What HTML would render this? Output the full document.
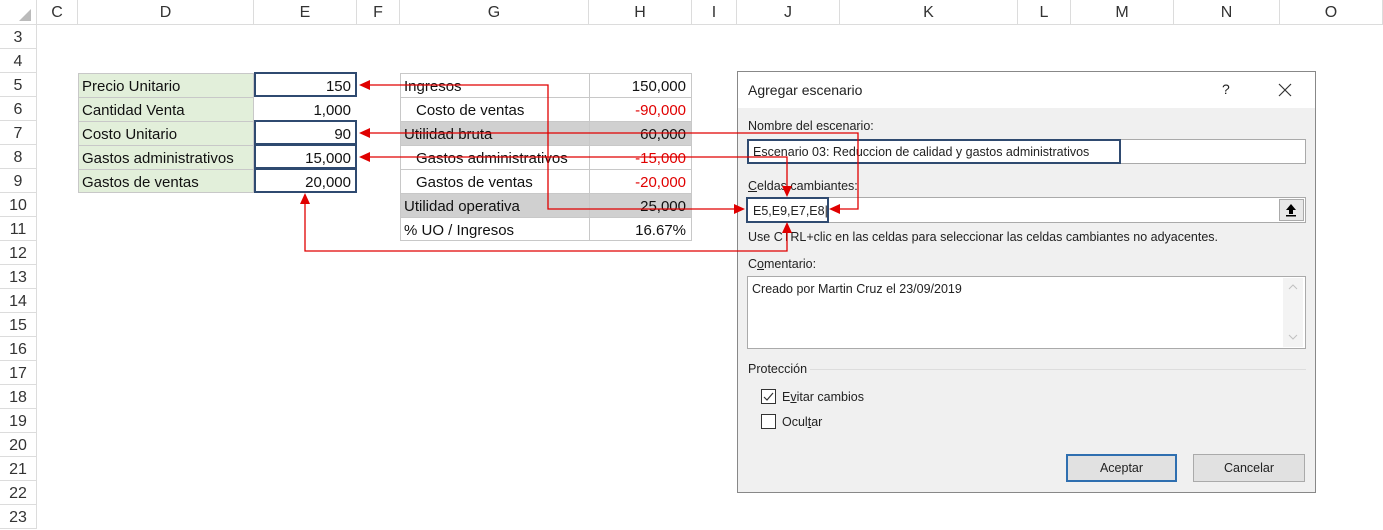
<!DOCTYPE html>
<html><head><meta charset="utf-8"><style>
*{margin:0;padding:0;box-sizing:border-box}
body{width:1383px;height:529px;position:relative;overflow:hidden;background:#fff;font-family:"Liberation Sans",Calibri,sans-serif;}
.a{position:absolute}
.hd{position:absolute;background:#fff;color:#333;font-size:16px;text-align:center;border-right:1px solid #dcdcdc;border-bottom:1px solid #dcdcdc}
.c{position:absolute;font-size:15px;line-height:24px;padding-top:2px;white-space:nowrap;color:#111}
.g{background:#e2efda}
.dlg{font-family:"Liberation Sans",sans-serif;font-size:12.5px;color:#222}
</style></head><body>
<div class="hd" style="left:0;top:0;width:37px;height:25px;background:#fff"></div>
<svg class="a" style="left:18px;top:8px" width="14" height="14"><polygon points="13,1 13,13 1,13" fill="#bbb"/></svg>
<div class="hd" style="left:37px;top:0;width:41px;height:25px;line-height:25px">C</div>
<div class="hd" style="left:78px;top:0;width:176px;height:25px;line-height:25px">D</div>
<div class="hd" style="left:254px;top:0;width:103px;height:25px;line-height:25px">E</div>
<div class="hd" style="left:357px;top:0;width:43px;height:25px;line-height:25px">F</div>
<div class="hd" style="left:400px;top:0;width:189px;height:25px;line-height:25px">G</div>
<div class="hd" style="left:589px;top:0;width:103px;height:25px;line-height:25px">H</div>
<div class="hd" style="left:692px;top:0;width:45px;height:25px;line-height:25px">I</div>
<div class="hd" style="left:737px;top:0;width:103px;height:25px;line-height:25px">J</div>
<div class="hd" style="left:840px;top:0;width:178px;height:25px;line-height:25px">K</div>
<div class="hd" style="left:1018px;top:0;width:53px;height:25px;line-height:25px">L</div>
<div class="hd" style="left:1071px;top:0;width:103px;height:25px;line-height:25px">M</div>
<div class="hd" style="left:1174px;top:0;width:106px;height:25px;line-height:25px">N</div>
<div class="hd" style="left:1280px;top:0;width:103px;height:25px;line-height:25px">O</div>
<div id="rows"></div>
<script>
var h='';for(var r=3;r<=23;r++){var y=25+(r-3)*24;h+='<div class="hd" style="left:0;top:'+y+'px;width:37px;height:24px;line-height:25px">'+r+'</div>';}
document.getElementById('rows').innerHTML=h;
</script>
<div class="a g" style="left:78px;top:73px;width:176px;height:120px;border:1px solid #c8c8c8"></div>
<div class="a" style="left:78px;top:97px;width:176px;border-top:1px solid #c8c8c8"></div>
<div class="a" style="left:78px;top:121px;width:176px;border-top:1px solid #c8c8c8"></div>
<div class="a" style="left:78px;top:145px;width:176px;border-top:1px solid #c8c8c8"></div>
<div class="a" style="left:78px;top:169px;width:176px;border-top:1px solid #c8c8c8"></div>
<div class="c" style="left:82px;top:73px">Precio Unitario</div>
<div class="c" style="left:82px;top:97px">Cantidad Venta</div>
<div class="c" style="left:82px;top:121px">Costo Unitario</div>
<div class="c" style="left:82px;top:145px">Gastos administrativos</div>
<div class="c" style="left:82px;top:169px">Gastos de ventas</div>
<div class="a" style="left:254px;top:72px;width:103px;height:25px;border:2px solid #2f4a70"></div>
<div class="a" style="left:254px;top:120px;width:103px;height:25px;border:2px solid #2f4a70"></div>
<div class="a" style="left:254px;top:144px;width:103px;height:25px;border:2px solid #2f4a70"></div>
<div class="a" style="left:254px;top:168px;width:103px;height:25px;border:2px solid #2f4a70"></div>
<div class="c" style="left:254px;top:73px;width:97px;text-align:right">150</div>
<div class="c" style="left:254px;top:97px;width:97px;text-align:right">1,000</div>
<div class="c" style="left:254px;top:121px;width:97px;text-align:right">90</div>
<div class="c" style="left:254px;top:145px;width:97px;text-align:right">15,000</div>
<div class="c" style="left:254px;top:169px;width:97px;text-align:right">20,000</div>
<div class="a" style="left:400px;top:121px;width:292px;height:24px;background:#d0d0d0"></div>
<div class="a" style="left:400px;top:193px;width:292px;height:24px;background:#d0d0d0"></div>
<div class="a" style="left:400px;top:73px;width:292px;height:168px;border:1px solid #c8c8c8"></div>
<div class="a" style="left:589px;top:73px;height:168px;border-left:1px solid #c8c8c8"></div>
<script>
for(var i=1;i<7;i++)document.write('<div class="a" style="left:400px;top:'+(73+24*i)+'px;width:292px;border-top:1px solid #c8c8c8"></div>');
</script>
<div class="c" style="left:404px;top:73px">Ingresos</div>
<div class="c" style="left:416px;top:97px">Costo de ventas</div>
<div class="c" style="left:404px;top:121px">Utilidad bruta</div>
<div class="c" style="left:416px;top:145px">Gastos administrativos</div>
<div class="c" style="left:416px;top:169px">Gastos de ventas</div>
<div class="c" style="left:404px;top:193px">Utilidad operativa</div>
<div class="c" style="left:404px;top:217px">% UO / Ingresos</div>
<div class="c" style="left:589px;top:73px;width:97px;text-align:right">150,000</div>
<div class="c" style="left:589px;top:97px;width:97px;text-align:right;color:#e00000">-90,000</div>
<div class="c" style="left:589px;top:121px;width:97px;text-align:right">60,000</div>
<div class="c" style="left:589px;top:145px;width:97px;text-align:right;color:#e00000">-15,000</div>
<div class="c" style="left:589px;top:169px;width:97px;text-align:right;color:#e00000">-20,000</div>
<div class="c" style="left:589px;top:193px;width:97px;text-align:right">25,000</div>
<div class="c" style="left:589px;top:217px;width:97px;text-align:right">16.67%</div>
<div class="a dlg" style="left:737px;top:71px;width:579px;height:422px;background:#f0f0f0;border:1px solid #888">
 <div class="a" style="left:0;top:0;width:577px;height:36px;background:#fff"></div>
 <div class="a" style="left:10px;top:10px;font-size:14px">Agregar escenario</div>
 <div class="a" style="left:484px;top:9px;font-size:14px">?</div>
 <svg class="a" style="left:540px;top:11px" width="14" height="14"><path d="M1 1L13 13M13 1L1 13" stroke="#333" stroke-width="1.2"/></svg>
 <div class="a" style="left:10px;top:47px">Nombre del escenario:</div>
 <div class="a" style="left:9px;top:67px;width:559px;height:25px;background:#fff;border:1px solid #aaa"></div>
 <div class="a" style="left:9px;top:67px;width:374px;height:25px;border:2px solid #2f4a70;padding:4px 0 0 4px;white-space:nowrap">Escenario 03: Reduccion de calidad y gastos administrativos</div>
 <div class="a" style="left:10px;top:107px"><u>C</u>eldas cambiantes:</div>
 <div class="a" style="left:9px;top:125px;width:559px;height:26px;background:#fff;border:1px solid #aaa"></div>
 <div class="a" style="left:8px;top:125px;width:83px;height:26px;border:2px solid #2f4a70;padding:5px 0 0 5px;white-space:nowrap">E5,E9,E7,E8|</div>
 <div class="a" style="left:541px;top:127px;width:25px;height:22px;background:#e8e8e8;border:1px solid #aaa"></div>
 <svg class="a" style="left:546px;top:131px" width="14" height="14"><polygon points="7,1 12,7 9,7 9,11 5,11 5,7 2,7" fill="#000"/><rect x="2" y="12" width="10" height="1.5" fill="#000"/></svg>
 <div class="a" style="left:10px;top:158px">Use CTRL+clic en las celdas para seleccionar las celdas cambiantes no adyacentes.</div>
 <div class="a" style="left:10px;top:185px">C<u>o</u>mentario:</div>
 <div class="a" style="left:9px;top:204px;width:559px;height:73px;background:#fff;border:1px solid #aaa;padding:5px 4px">Creado por Martin Cruz el 23/09/2019</div>
 <div class="a" style="left:545px;top:206px;width:20px;height:69px;background:#f3f3f3"></div>
 <svg class="a" style="left:549px;top:210px" width="12" height="64"><path d="M2 7L6 3L10 7M2 53L6 57L10 53" stroke="#c0c0c0" fill="none"/></svg>
 <div class="a" style="left:10px;top:290px">Protección</div>
 <div class="a" style="left:72px;top:297px;width:496px;border-top:1px solid #ddd"></div>
 <div class="a" style="left:23px;top:317px;width:15px;height:15px;background:#fff;border:1px solid #333"></div>
 <svg class="a" style="left:24px;top:318px" width="13" height="13"><path d="M2 7L5 10L11 3" stroke="#333" fill="none" stroke-width="1.2"/></svg>
 <div class="a" style="left:44px;top:318px">E<u>v</u>itar cambios</div>
 <div class="a" style="left:23px;top:342px;width:15px;height:15px;background:#fff;border:1px solid #333"></div>
 <div class="a" style="left:44px;top:343px">Ocul<u>t</u>ar</div>
 <div class="a" style="left:328px;top:382px;width:111px;height:28px;background:#e1e1e1;border:2px solid #2f6fb0;text-align:center;line-height:24px">Aceptar</div>
 <div class="a" style="left:455px;top:382px;width:112px;height:28px;background:#e1e1e1;border:1px solid #aaa;text-align:center;line-height:26px">Cancelar</div>
</div>
<svg class="a" style="left:0;top:0" width="1383" height="529">
<g stroke="#e00000" stroke-width="1.3" fill="none">
<path d="M305 203V251H787V232"/>
<path d="M368 85H548V209H735"/>
<path d="M368 133H858V209H838"/>
<path d="M368 157H787V188"/>
</g>
<g fill="#e00000">
<polygon points="305,193 300,204 310,204"/>
<polygon points="359,85 370,80 370,90"/>
<polygon points="359,133 370,128 370,138"/>
<polygon points="359,157 370,152 370,162"/>
<polygon points="745,209 734,204 734,214"/>
<polygon points="829,209 840,204 840,214"/>
<polygon points="787,197 782,186 792,186"/>
<polygon points="787,222 782,233 792,233"/>
</g>
</svg>
</body></html>
